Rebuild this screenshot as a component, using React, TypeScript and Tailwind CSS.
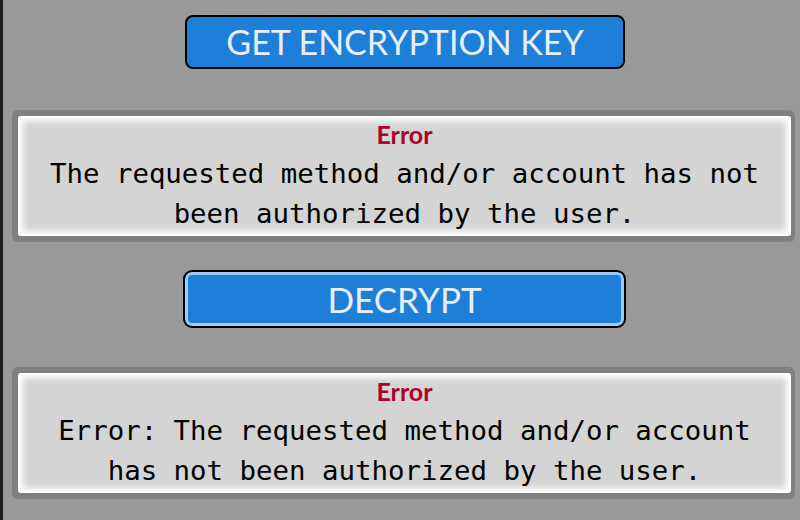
import React from "react";

const mono = "font-['DejaVu_Sans_Mono',monospace]";

function ErrorBox({ lines }: { lines: string[] }) {
  return (
    <div className="w-[783px] ml-[9px] rounded-[6px] bg-[#808080] pt-[6px] pb-[6px] pl-[6px] pr-[4px]">
      <div className="rounded-[3px] border-2 border-white bg-[#d4d4d4] shadow-[inset_0_0_6px_3px_#ffffff] pt-[4px] text-center">
        <div className="font-['Lato',sans-serif] font-bold text-[25px] leading-[24px] text-[#b0002a]">
          Error
        </div>
        <div className={`${mono} mt-[8px] text-[27.4px] leading-[40px] text-black`}>
          {lines.map((l) => (
            <div key={l}>{l}</div>
          ))}
        </div>
      </div>
    </div>
  );
}

export default function App() {
  return (
    <div className="w-[800px] h-[520px] overflow-hidden bg-[#999999] border-l-[3px] border-[#1c1c1c] flex flex-col items-start">
      <button className="mt-[15px] ml-[182px] w-[440px] h-[54px] rounded-[8px] border-2 border-black bg-[#1e7fd9] font-['Lato',sans-serif] text-[34px] leading-none text-[#e8eef6]">
        GET ENCRYPTION KEY
      </button>

      <div className="mt-[41px]">
        <ErrorBox
          lines={[
            "The requested method and/or account has not",
            "been authorized by the user.",
          ]}
        />
      </div>

      <button className="mt-[28px] ml-[180px] w-[443px] h-[58px] rounded-[9px] border-2 border-black bg-[#1e7fd9] shadow-[inset_0_0_0_3px_#9ccbff] font-['Lato',sans-serif] text-[35px] leading-none text-[#e8eef6]">
        DECRYPT
      </button>

      <div className="mt-[39px]">
        <ErrorBox
          lines={[
            "Error: The requested method and/or account",
            "has not been authorized by the user.",
          ]}
        />
      </div>
    </div>
  );
}
